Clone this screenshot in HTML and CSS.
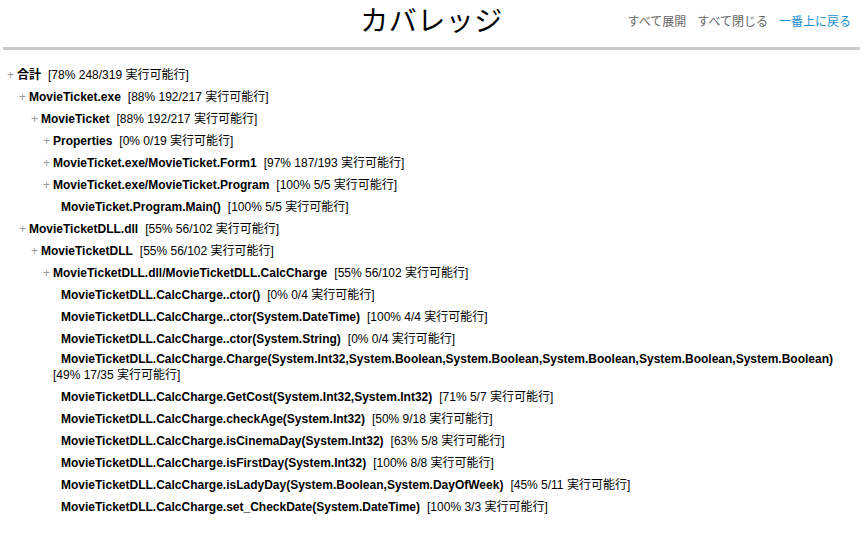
FILE: index.html
```html
<!DOCTYPE html>
<html>
	<head>
		<meta charset="UTF-8">
		<title>カバレッジ</title>
		<link rel="stylesheet" href="styles.css">
	</head>
	<body>
		<div id="page">
			<header class="head">
				<span></span>
				<h1 class="title">カバレッジ</h1>
				<nav class="links">
					<a href="#" class="op">すべて展開</a>
					<a href="#" class="op">すべて閉じる</a>
					<a href="#" class="top">一番上に戻る</a>
				</nav>
			</header>
			<hr class="line">
			<ul class="tree">
				<li><div class="row"><span class="tg">+</span><b>合計</b><span class="st">[78% 248/319 実行可能行]</span></div>
					<ul>
						<li><div class="row"><span class="tg">+</span><b>MovieTicket.exe</b><span class="st">[88% 192/217 実行可能行]</span></div>
							<ul>
								<li><div class="row"><span class="tg">+</span><b>MovieTicket</b><span class="st">[88% 192/217 実行可能行]</span></div>
									<ul>
										<li><div class="row"><span class="tg">+</span><b>Properties</b><span class="st">[0% 0/19 実行可能行]</span></div></li>
										<li><div class="row"><span class="tg">+</span><b>MovieTicket.exe/MovieTicket.Form1</b><span class="st">[97% 187/193 実行可能行]</span></div></li>
										<li><div class="row"><span class="tg">+</span><b>MovieTicket.exe/MovieTicket.Program</b><span class="st">[100% 5/5 実行可能行]</span></div>
											<ul>
												<li class="leaf"><b>MovieTicket.Program.Main()</b><span class="st">[100% 5/5 実行可能行]</span></li>
											</ul>
										</li>
									</ul>
								</li>
							</ul>
						</li>
						<li><div class="row"><span class="tg">+</span><b>MovieTicketDLL.dll</b><span class="st">[55% 56/102 実行可能行]</span></div>
							<ul>
								<li><div class="row"><span class="tg">+</span><b>MovieTicketDLL</b><span class="st">[55% 56/102 実行可能行]</span></div>
									<ul>
										<li><div class="row"><span class="tg">+</span><b>MovieTicketDLL.dll/MovieTicketDLL.CalcCharge</b><span class="st">[55% 56/102 実行可能行]</span></div>
											<ul>
												<li class="leaf"><b>MovieTicketDLL.CalcCharge..ctor()</b><span class="st">[0% 0/4 実行可能行]</span></li>
												<li class="leaf"><b>MovieTicketDLL.CalcCharge..ctor(System.DateTime)</b><span class="st">[100% 4/4 実行可能行]</span></li>
												<li class="leaf"><b>MovieTicketDLL.CalcCharge..ctor(System.String)</b><span class="st">[0% 0/4 実行可能行]</span></li>
												<li class="leaf wrap"><b>MovieTicketDLL.CalcCharge.Charge(System.Int32,System.Boolean,System.Boolean,System.Boolean,System.Boolean,System.Boolean)</b> <span class="st">[49% 17/35 実行可能行]</span></li>
												<li class="leaf"><b>MovieTicketDLL.CalcCharge.GetCost(System.Int32,System.Int32)</b><span class="st">[71% 5/7 実行可能行]</span></li>
												<li class="leaf"><b>MovieTicketDLL.CalcCharge.checkAge(System.Int32)</b><span class="st">[50% 9/18 実行可能行]</span></li>
												<li class="leaf"><b>MovieTicketDLL.CalcCharge.isCinemaDay(System.Int32)</b><span class="st">[63% 5/8 実行可能行]</span></li>
												<li class="leaf"><b>MovieTicketDLL.CalcCharge.isFirstDay(System.Int32)</b><span class="st">[100% 8/8 実行可能行]</span></li>
												<li class="leaf"><b>MovieTicketDLL.CalcCharge.isLadyDay(System.Boolean,System.DayOfWeek)</b><span class="st">[45% 5/11 実行可能行]</span></li>
												<li class="leaf"><b>MovieTicketDLL.CalcCharge.set_CheckDate(System.DateTime)</b><span class="st">[100% 3/3 実行可能行]</span></li>
											</ul>
										</li>
									</ul>
								</li>
							</ul>
						</li>
					</ul>
				</li>
			</ul>
		</div>
	</body>
</html>
```

FILE: styles.css
```css
*{
	margin: 0;
	padding: 0;
}
body{
	background: #fff;
	color: #000;
	font: 12px/16px "Liberation Sans", "Noto Sans CJK JP", sans-serif;
}
li{
	list-style: none;
}
a{
	text-decoration: none;
}
#page{
	padding: 0 3px;
}
.head{
	display: grid;
	grid-template-columns: 1fr auto 1fr;
	align-items: center;
	height: 37px;
}
.title{
	font: normal 28px/36px "Noto Sans CJK JP", "Liberation Sans", sans-serif;
	color: #000;
	letter-spacing: 0.5px;
}
.links{
	justify-self: end;
	display: flex;
	gap: 11px;
	padding-right: 9px;
	padding-top: 5px;
	font: 12px/16px "Noto Sans CJK JP", sans-serif;
}
.links .op{
	color: #666;
}
.links .top{
	color: #1a8fd0;
}
.line{
	border: 0;
	height: 3px;
	background: #cbcbcb;
	margin-top: 10px;
}
.tree{
	margin-top: 14px;
	padding-left: 2px;
}
.tree ul{
	padding-left: 12px;
}
.row, .leaf{
	padding: 3px 0;
}
.leaf.wrap{
	padding-top: 1px;
}
.tg{
	display: inline-block;
	width: 12px;
	color: #999;
	padding-left: 2px;
	box-sizing: border-box;
}
.leaf{
	text-indent: 8px;
}
.st{
	margin-left: 7px;
}
.wrap .st{
	margin-left: 0;
}
```
